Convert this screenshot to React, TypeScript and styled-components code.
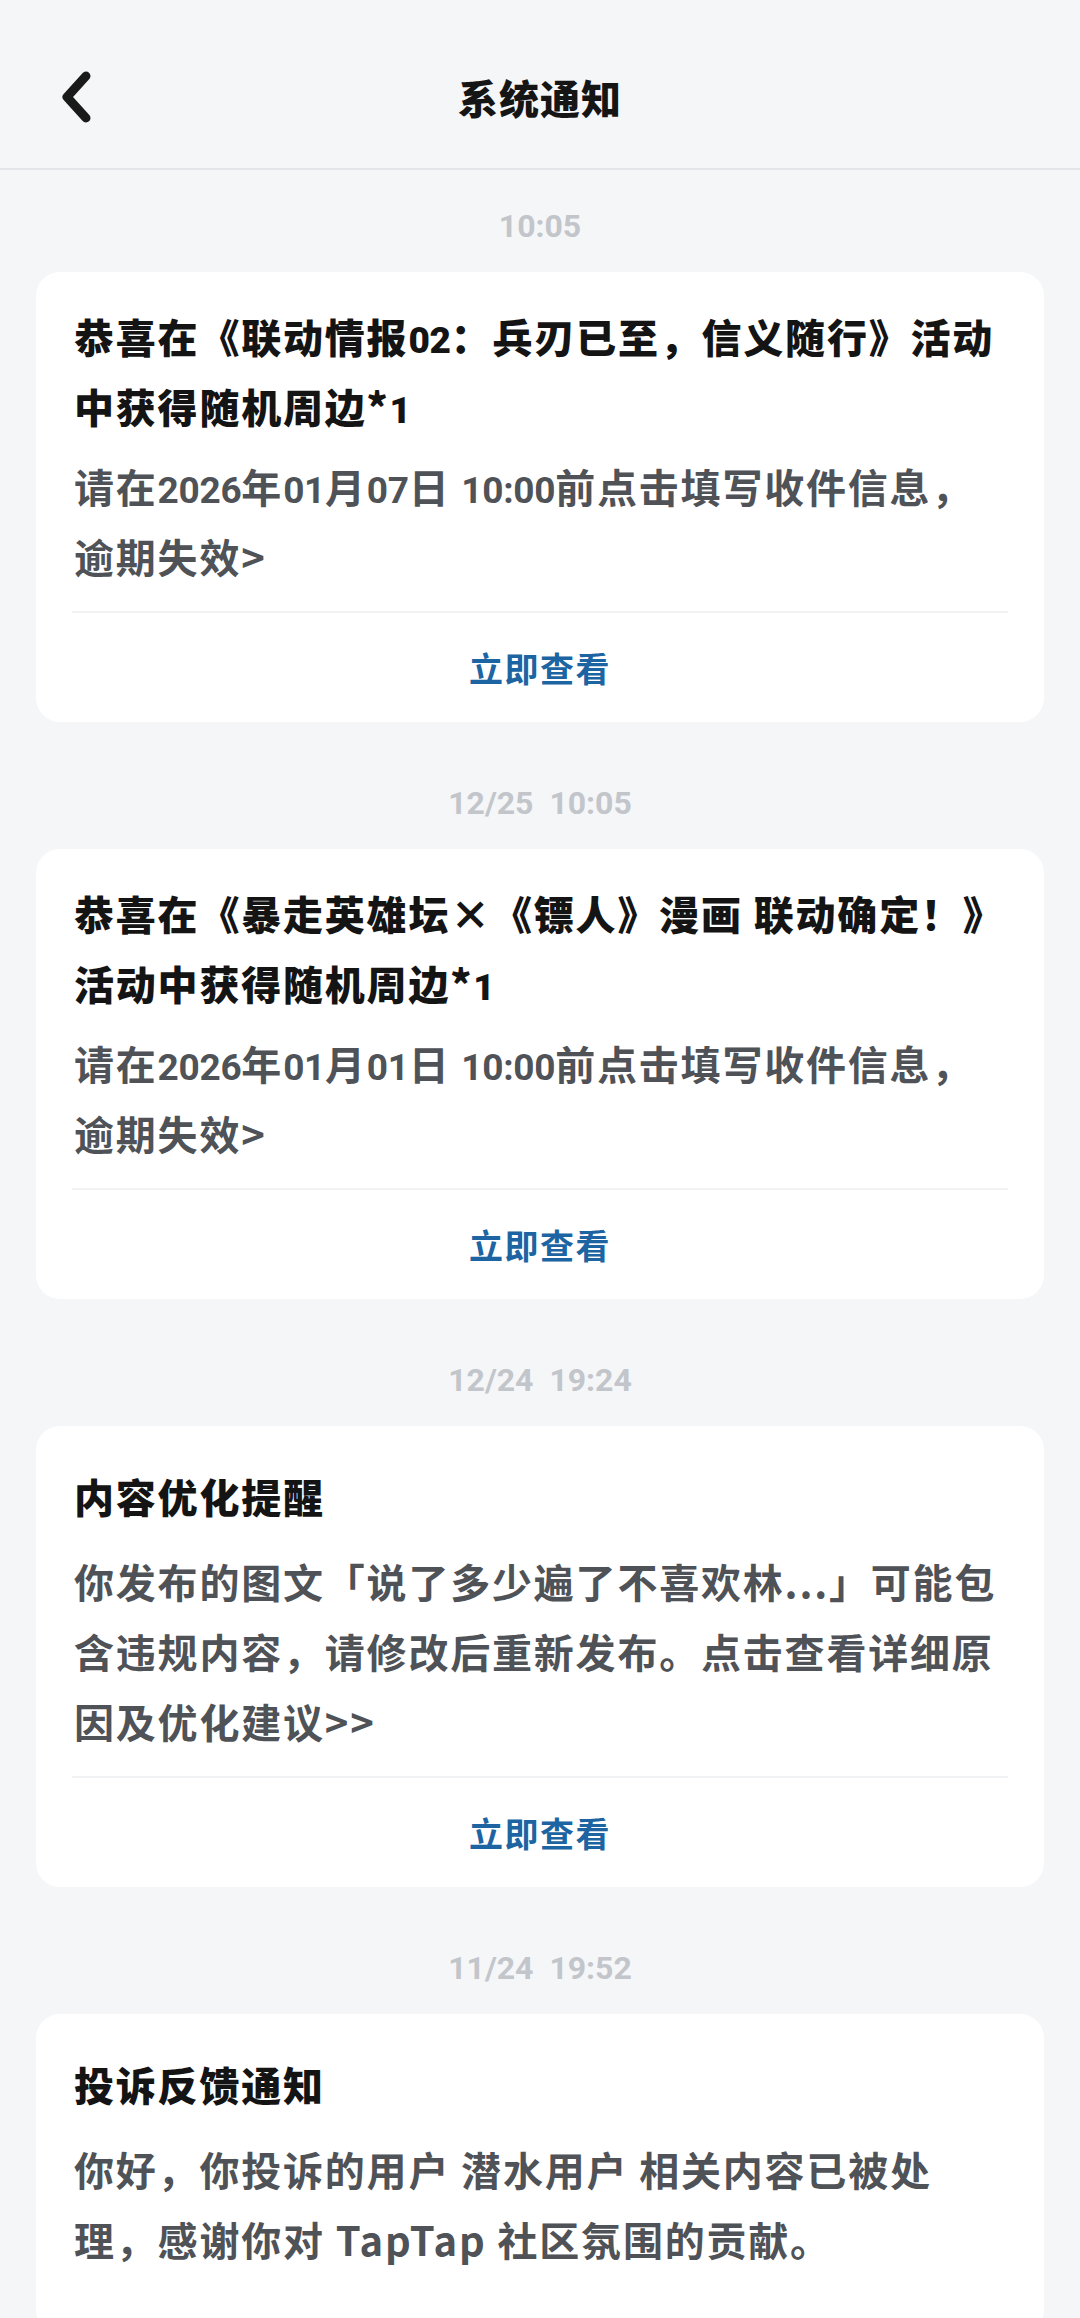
import React from "react";
import styled, { createGlobalStyle } from "styled-components";

type Notice = {
  time: string;
  title: string;
  body: string;
  action?: string;
};

const data: Notice[] = [
  {
    time: "10:05",
    title: "恭喜在《联动情报02：兵刃已至，信义随行》活动中获得随机周边*1",
    body: "请在2026年01月07日 10:00前点击填写收件信息，逾期失效>",
    action: "立即查看",
  },
  {
    time: "12/25  10:05",
    title: "恭喜在《暴走英雄坛×《镖人》漫画 联动确定！》活动中获得随机周边*1",
    body: "请在2026年01月01日 10:00前点击填写收件信息，逾期失效>",
    action: "立即查看",
  },
  {
    time: "12/24  19:24",
    title: "内容优化提醒",
    body: "你发布的图文「说了多少遍了不喜欢林...」可能包含违规内容，请修改后重新发布。点击查看详细原因及优化建议>>",
    action: "立即查看",
  },
  {
    time: "11/24  19:52",
    title: "投诉反馈通知",
    body: "你好，你投诉的用户 潜水用户 相关内容已被处理，感谢你对 TapTap 社区氛围的贡献。",
  },
];

// digits in the app use a narrower latin face than the CJK text
function withNums(text: string) {
  return text.split(/(\d+(?::\d+)*)/).map((part, i) =>
    /^\d/.test(part) ? <Num key={i}>{part}</Num> : part
  );
}

function App() {
  return (
    <>
      <GlobalStyle />
      <Page>
        <Header>
          <BackButton aria-label="返回">
            <svg width="40" height="60" viewBox="0 0 40 60" fill="none">
              <path
                d="M30 9 L11 30 L30 51"
                stroke="#1a1a1a"
                strokeWidth="9"
                strokeLinecap="round"
                strokeLinejoin="round"
              />
            </svg>
          </BackButton>
          <HeaderTitle>系统通知</HeaderTitle>
          <span />
        </Header>
        <List>
          {data.map((item, index) => {
            return (
              <Group key={index}>
                <Time>{item.time}</Time>
                <Card hasAction={!!item.action}>
                  <CardTitle>
                    <span>{withNums(item.title)}</span>
                  </CardTitle>
                  <CardBody>{withNums(item.body)}</CardBody>
                  {item.action && (
                    <Footer>
                      <ActionLink>{item.action}</ActionLink>
                    </Footer>
                  )}
                </Card>
              </Group>
            );
          })}
        </List>
      </Page>
    </>
  );
}

export default App;

const GlobalStyle = createGlobalStyle`
  * {
    box-sizing: border-box;
  }
  body {
    margin: 0;
    background: #f5f6f8;
    font-family: "Noto Sans CJK SC", "Noto Sans", sans-serif;
  }
`;

const Page = styled.div`
  width: 1080px;
  min-height: 2318px;
  background: #f5f6f8;
`;

const Header = styled.header`
  height: 170px;
  padding-top: 26px;
  display: grid;
  grid-template-columns: 1fr auto 1fr;
  align-items: center;
  border-bottom: 2px solid #e4e5e8;
`;

const BackButton = styled.div`
  width: 40px;
  height: 60px;
  margin-left: 56px;
  display: flex;
  svg {
    display: block;
  }
`;

const HeaderTitle = styled.h1`
  margin: 0;
  font-size: 40px;
  font-weight: 900;
  letter-spacing: 1px;
  color: #151515;
  line-height: 60px;
`;

const List = styled.div`
  display: flex;
  flex-direction: column;
  gap: 61px;
  padding: 36px 36px 0;
`;

const Group = styled.section`
  display: flex;
  flex-direction: column;
`;

const Time = styled.div`
  font-family: Roboto, "Noto Sans CJK SC", sans-serif;
  font-weight: 700;
  font-size: 32px;
  line-height: 40px;
  color: #c2c5ca;
  text-align: center;
  white-space: pre;
  margin-bottom: 26px;
`;

const Card = styled.div<{ hasAction: boolean }>`
  background: #ffffff;
  border-radius: 24px;
  padding: 29px 38px ${(p) => (p.hasAction ? "0" : "60px")};
`;

const CardTitle = styled.h2`
  margin: 0;
  min-height: 81px;
  display: flex;
  align-items: center;
  font-size: 40px;
  font-weight: 900;
  letter-spacing: 1.8px;
  line-height: 70px;
  color: #141414;
`;

const CardBody = styled.p`
  margin: 10px 0 0;
  font-size: 40px;
  font-weight: 700;
  letter-spacing: 1.8px;
  line-height: 70px;
  color: #4f5257;
`;

const Num = styled.span`
  font-family: Roboto, "Noto Sans CJK SC", sans-serif;
  font-size: 37px;
  line-height: 1;
  letter-spacing: -0.3px;
`;

const Footer = styled.div`
  margin: 20px -2px 0;
  height: 111px;
  border-top: 2px solid #f1f2f4;
  display: flex;
  align-items: center;
  justify-content: center;
`;

const ActionLink = styled.span`
  font-size: 34px;
  font-weight: 700;
  letter-spacing: 1.5px;
  color: #1d65a2;
  line-height: 40px;
`;
